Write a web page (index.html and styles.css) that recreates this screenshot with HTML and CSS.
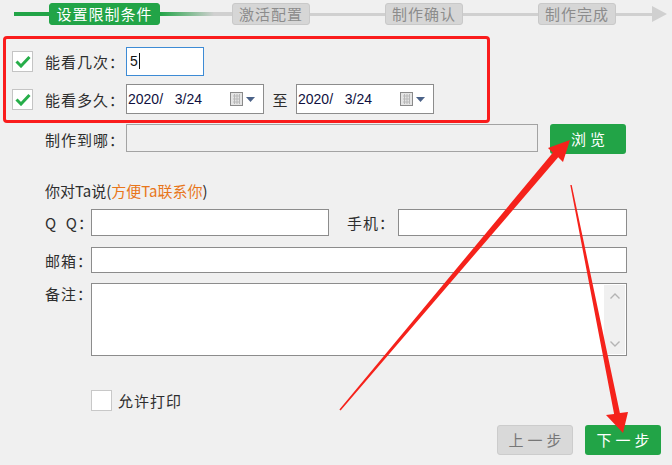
FILE: index.html
```html
<!DOCTYPE html>
<html>
  <head>
    <meta charset="utf-8">
    <title>制作向导</title>
    <link rel="stylesheet" href="styles.css">
  </head>
  <body>
    <div class="page">
      <!-- step bar -->
      <div class="stepper">
        <div class="line line-green short"></div>
        <div class="step step-active">设置限制条件</div>
        <div class="line line-fade"></div>
        <div class="step">激活配置</div>
        <div class="line"></div>
        <div class="step">制作确认</div>
        <div class="line"></div>
        <div class="step">制作完成</div>
        <div class="line tail"></div>
        <div class="tip"></div>
      </div>

      <!-- limits, marked with red box -->
      <div class="limits">
        <div class="row">
          <div class="check">
            <svg width="16" height="13" viewBox="0 0 16 13"><polyline points="1.5,6.5 6,11 14.5,2" fill="none" stroke="#27ae4a" stroke-width="3"/></svg>
          </div>
          <div class="label">能看几次：</div>
          <div class="input count">5<span class="caret"></span></div>
        </div>
        <div class="row row-second">
          <div class="check">
            <svg width="16" height="13" viewBox="0 0 16 13"><polyline points="1.5,6.5 6,11 14.5,2" fill="none" stroke="#27ae4a" stroke-width="3"/></svg>
          </div>
          <div class="label">能看多久：</div>
          <div class="input date">
            <span class="date-text">2020/   3/24</span>
            <svg class="cal" width="30" height="16" viewBox="0 0 30 16">
              <rect x="1.5" y="1.5" width="12" height="13" fill="#e4e4e4" stroke="#8a8a8a"/>
              <path d="M4 5h7M4 8h7M4 11h7M5.5 3v10M8 3v10M10.5 3v10" stroke="#b8b8b8" stroke-width="1"/>
              <polygon points="17,6 26,6 21.5,11" fill="#4b6288"/>
            </svg>
          </div>
          <div class="to">至</div>
          <div class="input date">
            <span class="date-text">2020/   3/24</span>
            <svg class="cal" width="30" height="16" viewBox="0 0 30 16">
              <rect x="1.5" y="1.5" width="12" height="13" fill="#e4e4e4" stroke="#8a8a8a"/>
              <path d="M4 5h7M4 8h7M4 11h7M5.5 3v10M8 3v10M10.5 3v10" stroke="#b8b8b8" stroke-width="1"/>
              <polygon points="17,6 26,6 21.5,11" fill="#4b6288"/>
            </svg>
          </div>
        </div>
      </div>

      <div class="form">
        <div class="row path-row">
          <div class="label">制作到哪：</div>
          <div class="input path"></div>
          <div class="btn btn-green browse">浏览</div>
        </div>

        <div class="title">你对Ta说(<span class="hint">方便Ta联系你</span>)</div>

        <div class="row contact-row">
          <div class="label small">Q&nbsp;&nbsp;Q：</div>
          <div class="input qq"></div>
          <div class="label phone-label">手机：</div>
          <div class="input phone"></div>
        </div>
        <div class="row mail-row">
          <div class="label small">邮箱：</div>
          <div class="input mail"></div>
        </div>
        <div class="row note-row">
          <div class="label small top">备注：</div>
          <div class="input note">
            <div class="scroll">
              <svg width="12" height="8" viewBox="0 0 12 8"><polyline points="1.5,6.5 6,2 10.5,6.5" fill="none" stroke="#b4b4b4" stroke-width="1.4"/></svg>
              <svg width="12" height="8" viewBox="0 0 12 8"><polyline points="1.5,1.5 6,6 10.5,1.5" fill="none" stroke="#b4b4b4" stroke-width="1.4"/></svg>
            </div>
          </div>
        </div>

        <div class="row print-row">
          <div class="check empty"></div>
          <div class="print-label">允许打印</div>
        </div>
      </div>

      <div class="actions">
        <div class="btn btn-gray">上一步</div>
        <div class="btn btn-green">下一步</div>
      </div>

      <!-- red annotation arrows -->
      <svg class="marks" width="672" height="465" viewBox="0 0 672 465">
        <polygon points="339.4,409.5 552.8,152.7 548,148 570,140 563,162 558.2,157.3 340.6,410.5" fill="#f5221b"/>
        <polygon points="570.3,185.1 614.1,414.1 606,415 623,433 628,412 619.9,412.9 571.7,184.9" fill="#f5221b"/>
      </svg>
    </div>
  </body>
</html>
```

FILE: styles.css
```css
body {
  margin: 0;
  background: #f0f0f0;
  font-family: "Noto Sans CJK SC", "Noto Sans", sans-serif;
  font-size: 14px;
  color: #2e2e2e;
}

.page {
  position: relative;
  width: 672px;
  height: 465px;
  overflow: hidden;
}

/* step bar */
.stepper {
  display: flex;
  align-items: center;
  height: 22px;
  padding: 3px 0 0 14px;
}

.line {
  width: 75px;
  height: 3px;
  background: #d0d0d0;
}

.line-green {
  height: 4px;
  background: #22a447;
}

.short {
  width: 35px;
}

.line-fade {
  width: 72px;
  height: 4px;
  background: linear-gradient(to right, #22a447, #d0d0d0 75%);
}

.tail {
  width: 36px;
}

.tip {
  width: 0;
  height: 0;
  border-top: 8px solid transparent;
  border-bottom: 8px solid transparent;
  border-left: 15px solid #d0d0d0;
}

.step {
  box-sizing: border-box;
  width: 78px;
  height: 22px;
  line-height: 20px;
  text-align: center;
  font-size: 15px;
  letter-spacing: 1px;
  color: #8c8c8c;
  background: #d6d6d6;
  border: 1px solid #c9c9c9;
  border-radius: 3px;
}

.step-active {
  width: 111px;
  color: #ffffff;
  background: #22a447;
  border-color: #22a447;
}

/* red box */
.limits {
  box-sizing: border-box;
  width: 487px;
  height: 87px;
  margin: 11px 0 0 3px;
  padding: 8px 0 0 6px;
  border: 3px solid #fa1c1c;
  border-radius: 4px;
}

.row {
  display: flex;
  align-items: center;
}

.row-second {
  margin-top: 8px;
}

.check {
  box-sizing: border-box;
  width: 21px;
  height: 21px;
  background: #ffffff;
  border: 1px solid #c4c4c4;
  display: flex;
  align-items: center;
  justify-content: center;
}

.limits .check {
  margin-right: 12px;
}

.label {
  width: 81px;
  font-size: 15px;
  letter-spacing: 1px;
  white-space: nowrap;
}

.input {
  box-sizing: border-box;
  background: #ffffff;
  border: 1px solid #8c8c8c;
}

.count {
  width: 78px;
  height: 29px;
  border-color: #3d8bd5;
  padding-left: 3px;
  font-family: "Liberation Sans", sans-serif;
  font-size: 14px;
  line-height: 27px;
  color: #111111;
}

.caret {
  display: inline-block;
  width: 1px;
  height: 16px;
  background: #111111;
  vertical-align: -3px;
  margin-left: 1px;
}

.date {
  width: 138px;
  height: 30px;
  display: flex;
  align-items: center;
  justify-content: space-between;
  padding: 0 4px 0 1px;
}

.date-text {
  white-space: pre;
  font-family: "Liberation Sans", sans-serif;
  font-size: 14px;
  color: #101040;
}

.to {
  width: 32px;
  text-align: center;
  font-size: 15px;
}

/* lower form */
.form {
  padding-left: 45px;
}

.path-row {
  margin-top: 1px;
  height: 30px;
}

.path {
  width: 412px;
  height: 28px;
  margin-bottom: 2px;
  background: #f0f0f0;
  border-color: #a3a3a3;
}

.btn {
  box-sizing: border-box;
  width: 76px;
  height: 30px;
  line-height: 30px;
  text-align: center;
  font-size: 15px;
  letter-spacing: 4px;
  text-indent: 4px;
  border-radius: 3px;
}

.btn-green {
  background: #22a447;
  color: #ffffff;
}

.btn-gray {
  background: #d9d9d9;
  border: 1px solid #cccccc;
  line-height: 28px;
  color: #777777;
}

.browse {
  margin-left: 12px;
}

.title {
  margin-top: 27px;
  height: 20px;
  line-height: 20px;
  font-size: 15px;
}

.hint {
  color: #e8761a;
}

.contact-row {
  margin-top: 8px;
}

.small {
  width: 46px;
}

.qq {
  width: 238px;
  height: 27px;
}

.phone-label {
  width: 69px;
  text-align: right;
  padding-right: 3px;
  box-sizing: border-box;
}

.phone {
  width: 229px;
  height: 27px;
}

.mail-row {
  margin-top: 11px;
}

.mail {
  width: 536px;
  height: 26px;
}

.note-row {
  margin-top: 10px;
  align-items: flex-start;
}

.top {
  line-height: 22px;
}

.note {
  width: 536px;
  height: 73px;
  display: flex;
  justify-content: flex-end;
  padding: 1px 1px 1px 0;
}

.scroll {
  width: 21px;
  background: #f0f0f0;
  display: flex;
  flex-direction: column;
  align-items: center;
  justify-content: space-between;
  padding: 7px 0 6px;
  box-sizing: border-box;
}

.print-row {
  margin-top: 34px;
  padding-left: 46px;
}

.empty {
  border-color: #c8c8c8;
}

.print-label {
  margin-left: 6px;
  font-size: 15px;
  letter-spacing: 1px;
}

.actions {
  display: flex;
  justify-content: flex-end;
  gap: 12px;
  margin-top: 14px;
  padding-right: 11px;
}

.marks {
  position: absolute;
  left: 0;
  top: 0;
  pointer-events: none;
}
```
